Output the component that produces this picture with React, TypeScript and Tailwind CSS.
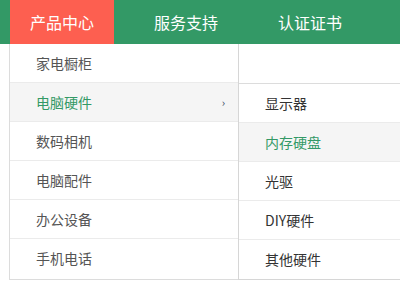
import React from 'react';

const navItems = ['产品中心', '服务支持', '认证证书'];
const menu = ['家电橱柜', '电脑硬件', '数码相机', '电脑配件', '办公设备', '手机电话'];
const subMenu = ['显示器', '内存硬盘', '光驱', 'DIY硬件', '其他硬件'];

function App() {
  return (
    <div
      className="w-[400px] h-[284px] overflow-hidden bg-white"
      style={{ fontFamily: '"Microsoft YaHei", "Noto Sans CJK SC", sans-serif' }}
    >
      <div className="h-[44px] bg-[#339966] flex pl-[10px] gap-[20px]">
        {navItems.map((item, i) => (
          <div
            key={item}
            className={
              i === 0
                ? 'w-[104px] flex items-center justify-center text-white text-[16px] bg-[#fd5f50]'
                : 'w-[104px] flex items-center justify-center text-white text-[16px]'
            }
          >
            {item}
          </div>
        ))}
      </div>

      <div className="flex pl-[9px]">
        {/* left menu */}
        <div className="w-[229px] border-l border-b border-[#dcdcdc]">
          {menu.map((item, i) => (
            <div
              key={item}
              className={
                i === 1
                  ? 'h-[39px] flex items-center justify-between pl-[26px] pr-[13px] bg-[#f5f5f5] text-[#339966] text-[14px] border-b border-[#ebebeb]'
                  : i === menu.length - 1
                    ? 'h-[39px] flex items-center pl-[26px] text-[#555] text-[14px]'
                    : 'h-[39px] flex items-center pl-[26px] text-[#555] text-[14px] border-b border-[#ebebeb]'
              }
            >
              <span>{item}</span>
              {i === 1 && <span className="text-[11px] text-[#34495e] leading-none">›</span>}
            </div>
          ))}
        </div>

        {/* sub menu */}
        <div className="flex-1 border-l border-[#d6d6d6]">
          <div className="h-[40px] border-b border-[#dcdcdc]" />
          <div className="border-b border-[#d6d6d6]">
            {subMenu.map((item, i) => (
              <div
                key={item}
                className={
                  i === 1
                    ? 'h-[39px] flex items-center pl-[26px] bg-[#f5f5f5] text-[#339966] text-[14px] border-b border-[#ebebeb]'
                    : i === subMenu.length - 1
                      ? 'h-[39px] flex items-center pl-[26px] text-[#333] text-[14px]'
                      : 'h-[39px] flex items-center pl-[26px] text-[#333] text-[14px] border-b border-[#ebebeb]'
                }
              >
                {item}
              </div>
            ))}
          </div>
        </div>
      </div>
    </div>
  );
}

export default App;
